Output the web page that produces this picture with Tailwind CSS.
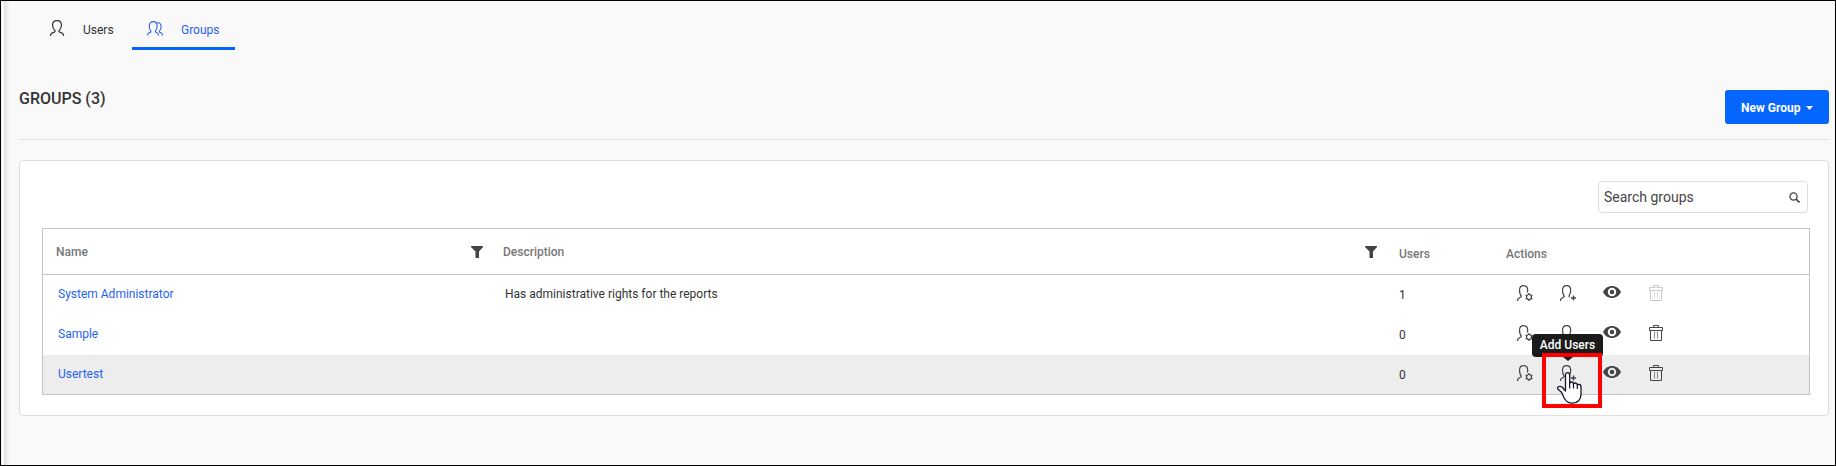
<!DOCTYPE html>
<html lang="en">
<head>
<meta charset="utf-8">
<meta name="viewport" content="width=device-width, initial-scale=1">
<title>Groups</title>
<script src="https://cdn.jsdelivr.net/npm/@tailwindcss/browser@4"></script>
</head>
<body class="bg-[#f9f9f9] font-[Roboto,sans-serif] text-xs text-[#333]">
<svg class="hidden" aria-hidden="true">
  <symbol id="user" viewBox="0 0 16 16"><path fill="none" stroke="currentColor" stroke-width="1.200" d="M1.500 16v-.8c0-1.200.7-1.800 1.800-2.300l2-.8c.8-.3 1-.8.7-1.400C4.700 9.300 3.500 7.400 3.500 5.300 3.500 2.300 5 .6 8 .6s4.500 1.700 4.500 4.700c0 2.100-1.200 4-2.500 5.400-.3.600-.1 1.100.7 1.400l2 .8c1.100.5 1.800 1.100 1.800 2.300v.8"/></symbol>
  <symbol id="group" viewBox="0 0 16 15"><path fill="none" stroke="currentColor" stroke-width="1.100" d="M.6 14.500v-.8c0-1 .6-1.500 1.500-1.900l1.200-.5c.7-.3.800-.7.500-1.300C2.900 8.700 2.300 6.500 2.300 5 2.300 2.200 3.700.6 6.200.6s3.900 1.600 3.900 4.400c0 1.500-.6 3.700-1.600 4.900-.3.600-.1 1 .4 1.300l1 .5c.9.400 1.500 1 1.500 1.900v.9M9.500 2c.4-.2.800-.3 1.300-.3 2.100 0 3.300 1.500 3.300 4 0 1.700-.7 3.300-1.600 4.300-.4.600-.1 1 .4 1.300l1 .5c.9.400 1.500.9 1.500 1.900v.8"/></symbol>
  <symbol id="user-gear" viewBox="0 0 16 16"><path fill="none" stroke="currentColor" stroke-width="1.200" d="M.6 16v-.8c0-1.200.6-1.800 1.500-2.200l1.400-.7c.7-.3.900-.8.600-1.500C3.100 9.300 2.500 7 2.500 5.400 2.500 2.300 4 .6 6.600.6s4.100 1.700 4.100 4.700c0 .8-.1 1.500-.3 2.200"/><circle cx="12" cy="12" r="2.500" fill="none" stroke="currentColor" stroke-width="1.200"/><path fill="none" stroke="currentColor" stroke-width="1.300" d="M12 8v1.600M12 14.400V16M8.600 10l1.300.8M14.100 13.200l1.300.8M8.600 14l1.300-.8M14.100 10.800l1.300-.8"/></symbol>
  <symbol id="user-plus" viewBox="0 0 16 16"><path fill="none" stroke="currentColor" stroke-width="1.200" d="M.6 16v-.8c0-1.200.6-1.800 1.500-2.200l1.400-.7c.7-.3.900-.8.600-1.500C3.100 9.300 2.500 7 2.500 5.400 2.500 2.300 4 .6 6.600.6s4.100 1.700 4.100 4.700c0 2-.7 4-1.600 5.400-.3.700-.1 1.200.6 1.600"/><path fill="none" stroke="currentColor" stroke-width="1.400" d="M13.500 10.500v5M11 13h5"/></symbol>
  <symbol id="eye" viewBox="0 0 18 12"><path fill="currentColor" fill-rule="evenodd" d="M9 0C5 0 1.800 2.300 0 6c1.800 3.700 5 6 9 6s7.200-2.300 9-6c-1.800-3.700-5-6-9-6zm0 1.800a4.200 4.200 0 1 1 0 8.400 4.200 4.200 0 0 1 0-8.400zM9 3.700a2.300 2.300 0 1 0 0 4.600 2.300 2.300 0 0 0 0-4.600z"/></symbol>
  <symbol id="trash" viewBox="0 0 16 16"><path fill="none" stroke="currentColor" d="M5.500 2.500v-2h5v2M1.500 2.500h13v3h-13zM2.500 5.500v10h11v-10"/><path fill="none" stroke="currentColor" stroke-opacity=".6" d="M6.500 6.500v7M9.500 6.500v7"/></symbol>
  <symbol id="filter" viewBox="0 0 12 12"><path fill="currentColor" d="M0 0h12v1L8 5.500V12H4.500V5.500L0 1z"/></symbol>
</svg>

<div class="min-h-screen border border-black pl-[3px]">
 <div class="min-h-[464px] bg-linear-to-r from-[#e2e0e1] to-[#f9f9f9] to-[6px] pr-1.5 pl-[15px]">
  <nav class="flex h-[49px] pl-3">
    <a href="#users" class="flex w-[101px] items-center pl-[18px]">
      <svg class="mt-1 mr-[18px] h-4 w-4"><use href="#user"/></svg><span class="mt-2">Users</span>
    </a>
    <a href="#groups" aria-current="page" class="flex w-[103px] items-center border-b-3 border-[#0565ff] pl-[15px] text-[#2961ee]">
      <svg class="mt-2 mr-[18px] h-[15px] w-4"><use href="#group"/></svg><span class="mt-3">Groups</span>
    </a>
  </nav>

  <header class="flex h-[90px] items-start justify-between border-b border-[#e0e0e0]">
    <h1 class="mt-[37px] text-base leading-6 font-medium">GROUPS (3)</h1>
    <button type="button" class="mt-10 flex h-[34px] w-[104px] items-center gap-1.5 rounded-[3px] bg-[#0565ff] pt-0.5 pl-4 font-bold text-white">New Group
      <svg class="h-1 w-[7px]" viewBox="0 0 7 4"><path fill="currentColor" d="M0 0h7L3.500 4z"/></svg>
    </button>
  </header>

  <main class="mt-5 rounded border border-[#e0e0e0] bg-white px-[18px] pt-5 pb-5 pl-[22px]">
    <div class="mr-0.5 flex justify-end">
      <label class="flex h-8 w-[210px] items-center rounded border border-[#ddd] pr-[7px] pl-[5px]">
        <input type="search" aria-label="Search groups" placeholder="Search groups" class="min-w-0 flex-1 text-sm outline-none placeholder:text-[#444]">
        <svg class="h-[11px] w-[11px]" viewBox="0 0 11 11" fill="none" stroke="#444"><circle cx="4.500" cy="4.500" r="3.600" stroke-width="1.300"/><path stroke-width="1.700" d="M7 7l3.500 3.500"/></svg>
      </label>
    </div>

    <div class="mt-[15px] border border-[#c4c4c4]">
      <table class="w-full table-fixed border-separate border-spacing-0 text-left">
        <colgroup><col class="w-[447px]"><col><col class="w-[107px]"><col class="w-[318px]"></colgroup>
        <thead class="text-[#777]">
          <tr class="h-[46px] *:border-b *:border-[#c4c4c4] *:font-medium">
            <th><div class="flex items-center justify-between pr-[7px] pl-[13px]">Name<button type="button" aria-label="Filter by name" class="text-[#444]"><svg class="h-3 w-3"><use href="#filter"/></svg></button></div></th>
            <th><div class="flex items-center justify-between pr-[7px] pl-[13px]">Description<button type="button" aria-label="Filter by description" class="text-[#444]"><svg class="h-3 w-3"><use href="#filter"/></svg></button></div></th>
            <th class="pt-1 pl-[15px]">Users</th>
            <th class="pt-1 pl-[15px]">Actions</th>
          </tr>
        </thead>
        <tbody>
          <tr class="h-10">
            <td class="pb-0.5 pl-[15px]"><a href="#system-administrator" class="text-[#1f63f2]">System Administrator</a></td>
            <td class="pb-0.5 pl-[15px]">Has administrative rights for the reports</td>
            <td class="pl-[15px]">1</td>
            <td class="pb-1 pl-[26px]"><div class="flex items-center text-[#444]">
              <button type="button" aria-label="Manage permissions" class="mr-[27px]"><svg class="h-4 w-4"><use href="#user-gear"/></svg></button>
              <button type="button" aria-label="Add Users" class="mr-[27px]"><svg class="h-4 w-4"><use href="#user-plus"/></svg></button>
              <button type="button" aria-label="View" class="mr-[27px]"><svg class="-mt-0.5 h-3 w-[18px]"><use href="#eye"/></svg></button>
              <button type="button" aria-label="Delete" disabled class="text-[#ccc]"><svg class="h-4 w-4"><use href="#trash"/></svg></button>
            </div></td>
          </tr>
          <tr class="h-10">
            <td class="pb-0.5 pl-[15px]"><a href="#sample" class="text-[#1f63f2]">Sample</a></td>
            <td></td>
            <td class="pl-[15px]">0</td>
            <td class="pb-1 pl-[26px]"><div class="flex items-center text-[#444]">
              <button type="button" aria-label="Manage permissions" class="mr-[27px]"><svg class="h-4 w-4"><use href="#user-gear"/></svg></button>
              <button type="button" aria-label="Add Users" class="mr-[27px]"><svg class="h-4 w-4"><use href="#user-plus"/></svg></button>
              <button type="button" aria-label="View" class="mr-[27px]"><svg class="-mt-0.5 h-3 w-[18px]"><use href="#eye"/></svg></button>
              <button type="button" aria-label="Delete"><svg class="h-4 w-4"><use href="#trash"/></svg></button>
            </div></td>
          </tr>
          <tr class="h-[39px] bg-[#ededed]">
            <td class="pb-0.5 pl-[15px]"><a href="#usertest" class="text-[#1f63f2]">Usertest</a></td>
            <td></td>
            <td class="pl-[15px]">0</td>
            <td class="pb-[3px] pl-[26px]"><div class="flex items-center text-[#444]">
              <button type="button" aria-label="Manage permissions" class="mr-[27px]"><svg class="h-4 w-4"><use href="#user-gear"/></svg></button>
              <div class="relative mr-[27px] flex">
                <button type="button" aria-label="Add Users" aria-describedby="tip"><svg class="h-4 w-4"><use href="#user-plus"/></svg></button>
                <div id="tip" role="tooltip" class="absolute -top-[31px] -left-7 h-[23px] w-[71px] rounded bg-[#1b1b1b] text-center leading-[22px] font-medium whitespace-nowrap text-white">Add Users
                  <svg class="absolute top-[23px] left-[31px] h-1 w-2.5" viewBox="0 0 10 4"><path fill="#1b1b1b" d="M0 0h10L5 4z"/></svg>
                </div>
                <div class="absolute -top-3 -left-[18px] h-[55px] w-[60px] border-4 border-[#f00]"></div>
                <svg class="absolute top-[7px] -left-[3px] h-8 w-[25px]" viewBox="0 0 25 32"><path fill="#fff" stroke="#14142b" stroke-width="1.300" stroke-linejoin="round" d="M8.500 19V3.200C8.500 1.600 9.400.7 10.600.7s2.100.9 2.100 2.500v8c.3-.8 1-1.200 1.800-1.200 1.200 0 1.900.7 2 1.900.4-.6 1-.9 1.800-.9 1.200 0 1.900.8 2 2 .4-.5.900-.7 1.600-.7 1.300 0 2.100.9 2.100 2.400V22c0 5.600-3.500 9.200-8.600 9.200-4.300 0-6.700-1.900-8.500-5.700L4.700 20.600 1.100 17.300c-.8-.8-.6-2 .2-2.500 1.200-.7 2.700-.5 4 .5z"/><path fill="none" stroke="#14142b" stroke-width="1.200" d="M12.700 11v5.500M16.500 12v4.500M20.300 13v4"/></svg>
              </div>
              <button type="button" aria-label="View" class="mr-[27px]"><svg class="-mt-0.5 h-3 w-[18px]"><use href="#eye"/></svg></button>
              <button type="button" aria-label="Delete"><svg class="h-4 w-4"><use href="#trash"/></svg></button>
            </div></td>
          </tr>
        </tbody>
      </table>
    </div>
  </main>
 </div>
</div>
</body>
</html>
